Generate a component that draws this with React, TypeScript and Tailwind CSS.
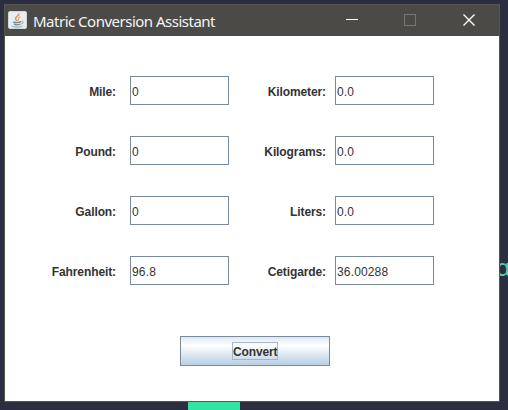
type FieldProps = { label: string; value: string; wide?: boolean };

function Field({ label, value, wide }: FieldProps) {
  return (
    <label className="flex h-[29px] items-center">
      <span
        className={`pt-[2px] text-right text-[12px] leading-[14px] font-bold tracking-[-0.1px] text-[#333333] ${
          wide ? "mr-[9px] w-[97px]" : "mr-[14px] w-[111px]"
        }`}
      >
        {label}
      </span>
      <input
        readOnly
        value={value}
        className="h-[29px] w-[99px] border border-[#7a8a99] bg-white px-px pt-[2px] text-[12px] leading-[14px] tracking-[0.15px] text-[#333333] outline-none"
      />
    </label>
  );
}

const rows = [
  ["Mile:", "0", "Kilometer:", "0.0"],
  ["Pound:", "0", "Kilograms:", "0.0"],
  ["Gallon:", "0", "Liters:", "0.0"],
  ["Fahrenheit:", "96.8", "Cetigarde:", "36.00288"],
];

function JavaIcon() {
  return (
    <svg width="20" height="20" viewBox="0 0 20 20" fill="none">
      <rect x="0.5" y="0.5" width="18" height="17" rx="1.5" fill="#e9edef" stroke="#d3d6d8" />
      <path d="M10.8 2.5C11.8 5 6.5 5.8 7.5 8C7.8 9 8.8 9.4 9 10" stroke="#e39a60" strokeWidth="1.7" />
      <path d="M12.3 5.8C9.5 6.8 10.8 8 10 9.8" stroke="#e7a36c" strokeWidth="1.2" />
      <path d="M5 10.8C7 11.8 11.5 11.6 13.2 10.6M6 13C8 14 11 13.8 12.4 13" stroke="#6f8ea5" strokeWidth="1.4" />
      <path d="M13.5 10.3C16.2 10.1 15.4 12.6 13 13.2M3.5 14.8C5 16.6 13 16.4 14.5 15" stroke="#8aa2b3" />
    </svg>
  );
}

export default function App() {
  return (
    <div className="relative h-[410px] w-[508px] overflow-hidden bg-[#2a2e3e] pt-1 pl-1 font-['Liberation_Sans',Arial,sans-serif]">
      <span className="absolute top-[253px] left-[496px] font-['Noto_Sans',sans-serif] text-[23px] leading-[28px] text-[#4fd0ae]">
        ɑ
      </span>
      <div className="absolute top-[402px] left-[188px] h-2 w-[52px] bg-[#32e3a2]" />
      <main className="relative flex h-[398px] w-[496px] flex-col border border-[#55554f] bg-white">
        <header className="flex h-[31px] shrink-0 items-center bg-[#4b4a47]">
          <div className="ml-[3px] flex w-[25px]">
            <JavaIcon />
          </div>
          <h1 className="w-[282px] font-['Noto_Sans',sans-serif] text-[15px] leading-5 tracking-[-0.5px] whitespace-nowrap text-[#f5f5f5]">
            Matric Conversion Assistant
          </h1>
          <svg width="180" height="31" viewBox="315 5 180 31" fill="none">
            <path d="M346 19.5H358" stroke="#ffffff" />
            <rect x="404.5" y="14.5" width="11" height="11" stroke="#777673" />
            <path d="M463.5 14.5L474.5 25.5M474.5 14.5L463.5 25.5" stroke="#ffffff" strokeWidth="1.4" />
          </svg>
        </header>
        <section className="mt-10 flex flex-col gap-[31px]">
          {rows.map(([left, input, right, output]) => (
            <div key={left} className="flex">
              <Field label={left} value={input} />
              <Field label={right} value={output} wide />
            </div>
          ))}
        </section>
        <button className="mt-[51px] ml-[175px] flex h-[30px] w-[150px] items-center justify-center border border-[#7a8a99] bg-linear-to-b from-[#dde8f3] via-white via-30% to-[#b8cfe5]">
          <span className="h-[18px] w-[46px] border border-[#a3b8cc] pt-px text-center text-[12px] leading-[17px] font-bold tracking-[-0.15px] whitespace-nowrap text-[#333333]">
            Convert
          </span>
        </button>
      </main>
    </div>
  );
}
